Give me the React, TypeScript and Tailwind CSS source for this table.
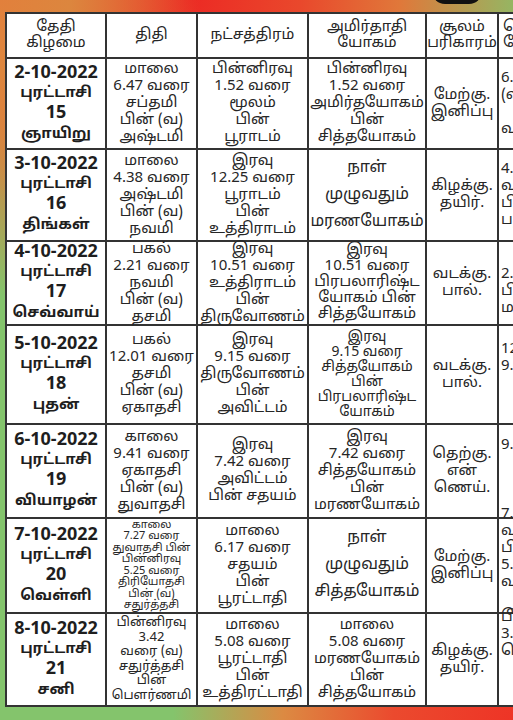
import React from 'react';

// Tamil calendar: one week of Purattasi 2022

type Row = {
  date: string;
  month: string;
  day: string;
  weekday: string;
  tithi: string[];
  tithiClass?: string;
  star: string[];
  yogam: string[];
  yogamClass?: string;
  soolam: string[];
  extra: string[];
  h: string;
};

const rows: Row[] = [
  {
    date: '2-10-2022',
    month: 'புரட்டாசி',
    day: '15',
    weekday: 'ஞாயிறு',
    tithi: ['மாலை', '6.47 வரை', 'சப்தமி', 'பின் (வ)', 'அஷ்டமி'],
    star: ['பின்னிரவு', '1.52 வரை', 'மூலம்', 'பின்', 'பூராடம்'],
    yogam: ['பின்னிரவு', '1.52 வரை', 'அமிர்தயோகம்', 'பின்', 'சித்தயோகம்'],
    soolam: ['மேற்கு.', 'இனிப்பு'],
    extra: ['6.47 வரை', '(வ)', '', 'வரை'],
    h: 'h-[89px]',
  },
  {
    date: '3-10-2022',
    month: 'புரட்டாசி',
    day: '16',
    weekday: 'திங்கள்',
    tithi: ['மாலை', '4.38 வரை', 'அஷ்டமி', 'பின் (வ)', 'நவமி'],
    star: ['இரவு', '12.25 வரை', 'பூராடம்', 'பின்', 'உத்திராடம்'],
    yogam: ['நாள்', 'முழுவதும்', 'மரணயோகம்'],
    yogamClass: 'text-[16px] leading-[27px]',
    soolam: ['கிழக்கு.', 'தயிர்.'],
    extra: ['4.38 வரை', 'வணிசை', 'பின்', 'பத்திரை'],
    h: 'h-[90px]',
  },
  {
    date: '4-10-2022',
    month: 'புரட்டாசி',
    day: '17',
    weekday: 'செவ்வாய்',
    tithi: ['பகல்', '2.21 வரை', 'நவமி', 'பின் (வ)', 'தசமி'],
    star: ['இரவு', '10.51 வரை', 'உத்திராடம்', 'பின்', 'திருவோணம்'],
    yogam: ['இரவு', '10.51 வரை', 'பிரபலாரிஷ்ட', 'யோகம் பின்', 'சித்தயோகம்'],
    yogamClass: 'leading-[16px]',
    soolam: ['வடக்கு.', 'பால்.'],
    extra: ['', '2.21 வரை', 'பின்', 'மகரம்'],
    h: 'h-[82px]',
  },
  {
    date: '5-10-2022',
    month: 'புரட்டாசி',
    day: '18',
    weekday: 'புதன்',
    tithi: ['பகல்', '12.01 வரை', 'தசமி', 'பின் (வ)', 'ஏகாதசி'],
    star: ['இரவு', '9.15 வரை', 'திருவோணம்', 'பின்', 'அவிட்டம்'],
    yogam: ['இரவு', '9.15 வரை', 'சித்தயோகம்', 'பின்', 'பிரபலாரிஷ்ட', 'யோகம்'],
    yogamClass: 'text-[14px] leading-[15px]',
    soolam: ['வடக்கு.', 'பால்.'],
    extra: ['12.01 வரை', '9.15', '', ''],
    h: 'h-[97px]',
  },
  {
    date: '6-10-2022',
    month: 'புரட்டாசி',
    day: '19',
    weekday: 'வியாழன்',
    tithi: ['காலை', '9.41 வரை', 'ஏகாதசி', 'பின் (வ)', 'துவாதசி'],
    star: ['இரவு', '7.42 வரை', 'அவிட்டம்', 'பின் சதயம்'],
    yogam: ['இரவு', '7.42 வரை', 'சித்தயோகம்', 'பின்', 'மரணயோகம்'],
    soolam: ['தெற்கு.', 'என்', 'ணெய்.'],
    extra: ['9.41 வரை', '', '', ''],
    h: 'h-[92px]',
  },
  {
    date: '7-10-2022',
    month: 'புரட்டாசி',
    day: '20',
    weekday: 'வெள்ளி',
    tithi: ['காலை', '7.27 வரை', 'துவாதசி பின்', 'பின்னிரவு', '5.25 வரை', 'திரியோதசி', 'பின் (வ)', 'சதுர்த்தசி'],
    tithiClass: 'text-[11px] leading-[11.5px]',
    star: ['மாலை', '6.17 வரை', 'சதயம்', 'பின்', 'பூரட்டாதி'],
    yogam: ['நாள்', 'முழுவதும்', 'சித்தயோகம்'],
    yogamClass: 'text-[16px] leading-[27px]',
    soolam: ['மேற்கு.', 'இனிப்பு'],
    extra: ['7.27', 'வரை பின்', 'பின்', '5.25', 'வரை', '', 'வெள்ளி'],
    h: 'h-[93px]',
  },
  {
    date: '8-10-2022',
    month: 'புரட்டாசி',
    day: '21',
    weekday: 'சனி',
    tithi: ['பின்னிரவு', '3.42', 'வரை (வ)', 'சதுர்த்தசி', 'பின்', 'பௌர்ணமி'],
    tithiClass: 'text-[13px] leading-[14.5px]',
    star: ['மாலை', '5.08 வரை', 'பூரட்டாதி', 'பின்', 'உத்திரட்டாதி'],
    yogam: ['மாலை', '5.08 வரை', 'மரணயோகம்', 'பின்', 'சித்தயோகம்'],
    soolam: ['கிழக்கு.', 'தயிர்.'],
    extra: ['பின்னிரவு', '3.42 வரை', 'வெள்ளி', '', '', ''],
    h: 'h-[91px]',
  },
];

const font = 'font-["Noto_Sans_Tamil","Lohit_Tamil","Noto_Sans","Liberation_Sans",sans-serif]';

function Lines({ lines, className }: { lines: string[]; className?: string }) {
  return (
    <div className={`flex flex-col items-center justify-center bg-white text-center text-[#262626] ${className ?? ''}`}>
      {lines.map((l, i) => (
        <span key={i} className="whitespace-nowrap">
          {l || '\u00a0'}
        </span>
      ))}
    </div>
  );
}

function DateCell({ r }: { r: Row }) {
  return (
    <div className={`flex flex-col items-center justify-center bg-white text-center font-bold text-[#1e1e1e] ${r.h}`}>
      <span className="text-[18px] leading-[21px]">{r.date}</span>
      <span className="text-[15px] leading-[20px]">{r.month}</span>
      <span className="text-[18px] leading-[20px]">{r.day}</span>
      <span className="text-[15px] leading-[21px]">{r.weekday}</span>
    </div>
  );
}

export default function App() {
  return (
    <div
      className={`relative h-[720px] w-[513px] overflow-hidden bg-[#84c46c] bg-[radial-gradient(circle_at_0px_0px,#e2803c_0px,#dc863e_70px,transparent_200px),radial-gradient(circle_at_190px_0px,#ec2a24_0px,#e9482c_110px,#e0783a_210px,transparent_350px),radial-gradient(circle_at_513px_720px,#ee3426_0px,#eb4a2e_120px,#dc8a42_230px,transparent_340px)] pt-[12px] pl-[5px] ${font}`}
    >
      {/* dark blob peeking at the top edge */}
      <div className="absolute left-[432px] top-[-22px] h-[26px] w-[50px] rounded-full bg-[#111]" />

      <div className="grid w-[600px] grid-cols-[98px_89px_109px_116px_70px_110px] gap-[2px] border-2 border-[#333] bg-[#333] text-[15px] leading-[17px]">
        {/* header */}
        <Lines lines={['தேதி', 'கிழமை']} className="h-[43px] leading-[16px]" />
        <Lines lines={['திதி']} className="h-[43px]" />
        <Lines lines={['நட்சத்திரம்']} className="h-[43px]" />
        <Lines lines={['அமிர்தாதி', 'யோகம்']} className="h-[43px] leading-[16px]" />
        <Lines lines={['சூலம்', 'பரிகாரம்']} className="h-[43px] leading-[16px]" />
        <Lines lines={['கௌரி நல்ல', 'நேரம்']} className="h-[43px] items-start pl-[4px] leading-[16px]" />

        {rows.map((r) => (
          <React.Fragment key={r.date}>
            <DateCell r={r} />
            <Lines lines={r.tithi} className={`${r.h} ${r.tithiClass ?? ''}`} />
            <Lines lines={r.star} className={r.h} />
            <Lines lines={r.yogam} className={`${r.h} ${r.yogamClass ?? ''}`} />
            <Lines lines={r.soolam} className={r.h} />
            <Lines lines={r.extra} className={`${r.h} items-start pl-[2px]`} />
          </React.Fragment>
        ))}
      </div>
    </div>
  );
}
